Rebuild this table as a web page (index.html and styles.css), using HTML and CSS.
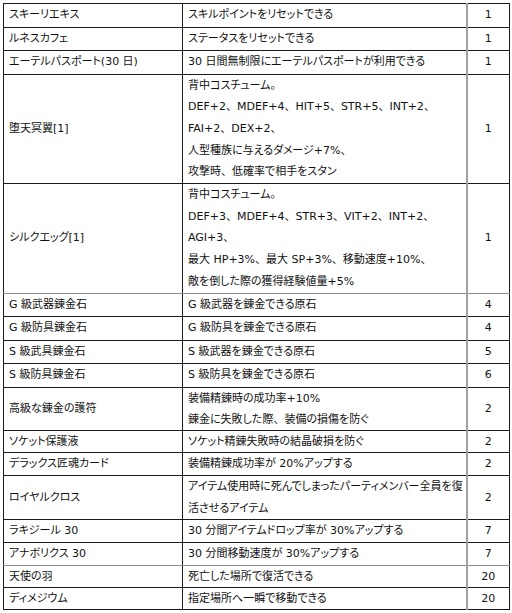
FILE: index.html
```html
<!DOCTYPE html>
<html lang="ja">
<head>
<meta charset="utf-8">
<link rel="stylesheet" href="styles.css">
</head>
<body>
<table class="items">
  <colgroup>
    <col class="c-name">
    <col class="c-desc">
    <col class="c-qty">
  </colgroup>
  <tbody>
    <tr class="s"><td class="name">スキーリエキス</td><td class="desc">スキルポイントをリセットできる</td><td class="qty">1</td></tr>
    <tr class="s"><td class="name">ルネスカフェ</td><td class="desc">ステータスをリセットできる</td><td class="qty">1</td></tr>
    <tr class="s"><td class="name">エーテルパスポート(30 日)</td><td class="desc">30 日間無制限にエーテルパスポートが利用できる</td><td class="qty">1</td></tr>
    <tr class="m5"><td class="name">堕天冥翼[1]</td><td class="desc">背中コスチューム。<br>DEF+2<span class="fw">、</span>MDEF+4<span class="fw">、</span>HIT+5<span class="fw">、</span>STR+5<span class="fw">、</span>INT+2<span class="fw">、</span><br>FAI+2<span class="fw">、</span>DEX+2<span class="fw">、</span><br>人型種族に与えるダメージ+7%<span class="fw">、</span><br>攻撃時<span class="fw">、</span>低確率で相手をスタン</td><td class="qty">1</td></tr>
    <tr class="m5 gray"><td class="name">シルクエッグ[1]</td><td class="desc">背中コスチューム。<br>DEF+3<span class="fw">、</span>MDEF+4<span class="fw">、</span>STR+3<span class="fw">、</span>VIT+2<span class="fw">、</span>INT+2<span class="fw">、</span><br>AGI+3<span class="fw">、</span><br>最大 HP+3%<span class="fw">、</span>最大 SP+3%<span class="fw">、</span>移動速度+10%<span class="fw">、</span><br>敵を倒した際の獲得経験値量+5%</td><td class="qty">1</td></tr>
    <tr class="s"><td class="name">G 級武器錬金石</td><td class="desc">G 級武器を錬金できる原石</td><td class="qty">4</td></tr>
    <tr class="s"><td class="name">G 級防具錬金石</td><td class="desc">G 級防具を錬金できる原石</td><td class="qty">4</td></tr>
    <tr class="s"><td class="name">S 級武具錬金石</td><td class="desc">S 級武器を錬金できる原石</td><td class="qty">5</td></tr>
    <tr class="s"><td class="name">S 級防具錬金石</td><td class="desc">S 級防具を錬金できる原石</td><td class="qty">6</td></tr>
    <tr class="m2"><td class="name">高級な錬金の護符</td><td class="desc">装備精錬時の成功率+10%<br>錬金に失敗した際<span class="fw">、</span>装備の損傷を防ぐ</td><td class="qty">2</td></tr>
    <tr class="t"><td class="name">ソケット保護液</td><td class="desc">ソケット精錬失敗時の結晶破損を防ぐ</td><td class="qty">2</td></tr>
    <tr class="s"><td class="name">デラックス匠魂カード</td><td class="desc">装備精錬成功率が 20%アップする</td><td class="qty">2</td></tr>
    <tr class="m2"><td class="name">ロイヤルクロス</td><td class="desc">アイテム使用時に死んでしまったパーティメンバー全員を復<br>活させるアイテム</td><td class="qty">2</td></tr>
    <tr class="s"><td class="name">ラキジール 30</td><td class="desc">30 分間アイテムドロップ率が 30%アップする</td><td class="qty">7</td></tr>
    <tr class="a gray"><td class="name">アナボリクス 30</td><td class="desc">30 分間移動速度が 30%アップする</td><td class="qty">7</td></tr>
    <tr class="t"><td class="name">天使の羽</td><td class="desc">死亡した場所で復活できる</td><td class="qty">20</td></tr>
    <tr class="t"><td class="name">ディメジウム</td><td class="desc">指定場所へ一瞬で移動できる</td><td class="qty">20</td></tr>
  </tbody>
</table>
</body>
</html>
```
FILE: styles.css
```css
html, body {
  margin: 0;
  padding: 0;
  background: #ffffff;
}

body {
  padding: 3px 0 0 3px;
}

.items {
  border-collapse: collapse;
  table-layout: fixed;
  width: 506px;
  font-family: "DejaVu Sans", "Noto Sans CJK JP", sans-serif;
  font-size: 11px;
  font-feature-settings: "palt";
  color: #111111;
  border: 1px solid #1a1a1a;
}

.c-name { width: 179px; }
.c-desc { width: 284px; }
.c-qty { width: 43px; }

.items td {
  border-top: 1px solid #1a1a1a;
  border-bottom: 1px solid #1a1a1a;
  padding: 0;
  vertical-align: middle;
  white-space: nowrap;
  overflow: hidden;
}

.items td.name {
  padding-left: 5px;
  border-right: 1px solid #1a1a1a;
}

.items td.desc {
  padding-left: 5px;
  border-right: 2px solid #a0a0a0;
}

.items td.qty {
  text-align: center;
}

.fw {
  font-feature-settings: normal;
}

.items tr.s td { line-height: 22.5px; }
.items tr.t td { line-height: 21px; }
.items tr.a td { line-height: 21.7px; }
.items tr.m2 td { line-height: 21.2px; }
.items tr.m5 td { line-height: 21.7px; }

.items tr.gray td { border-bottom-color: #8a8a8a; }
```
